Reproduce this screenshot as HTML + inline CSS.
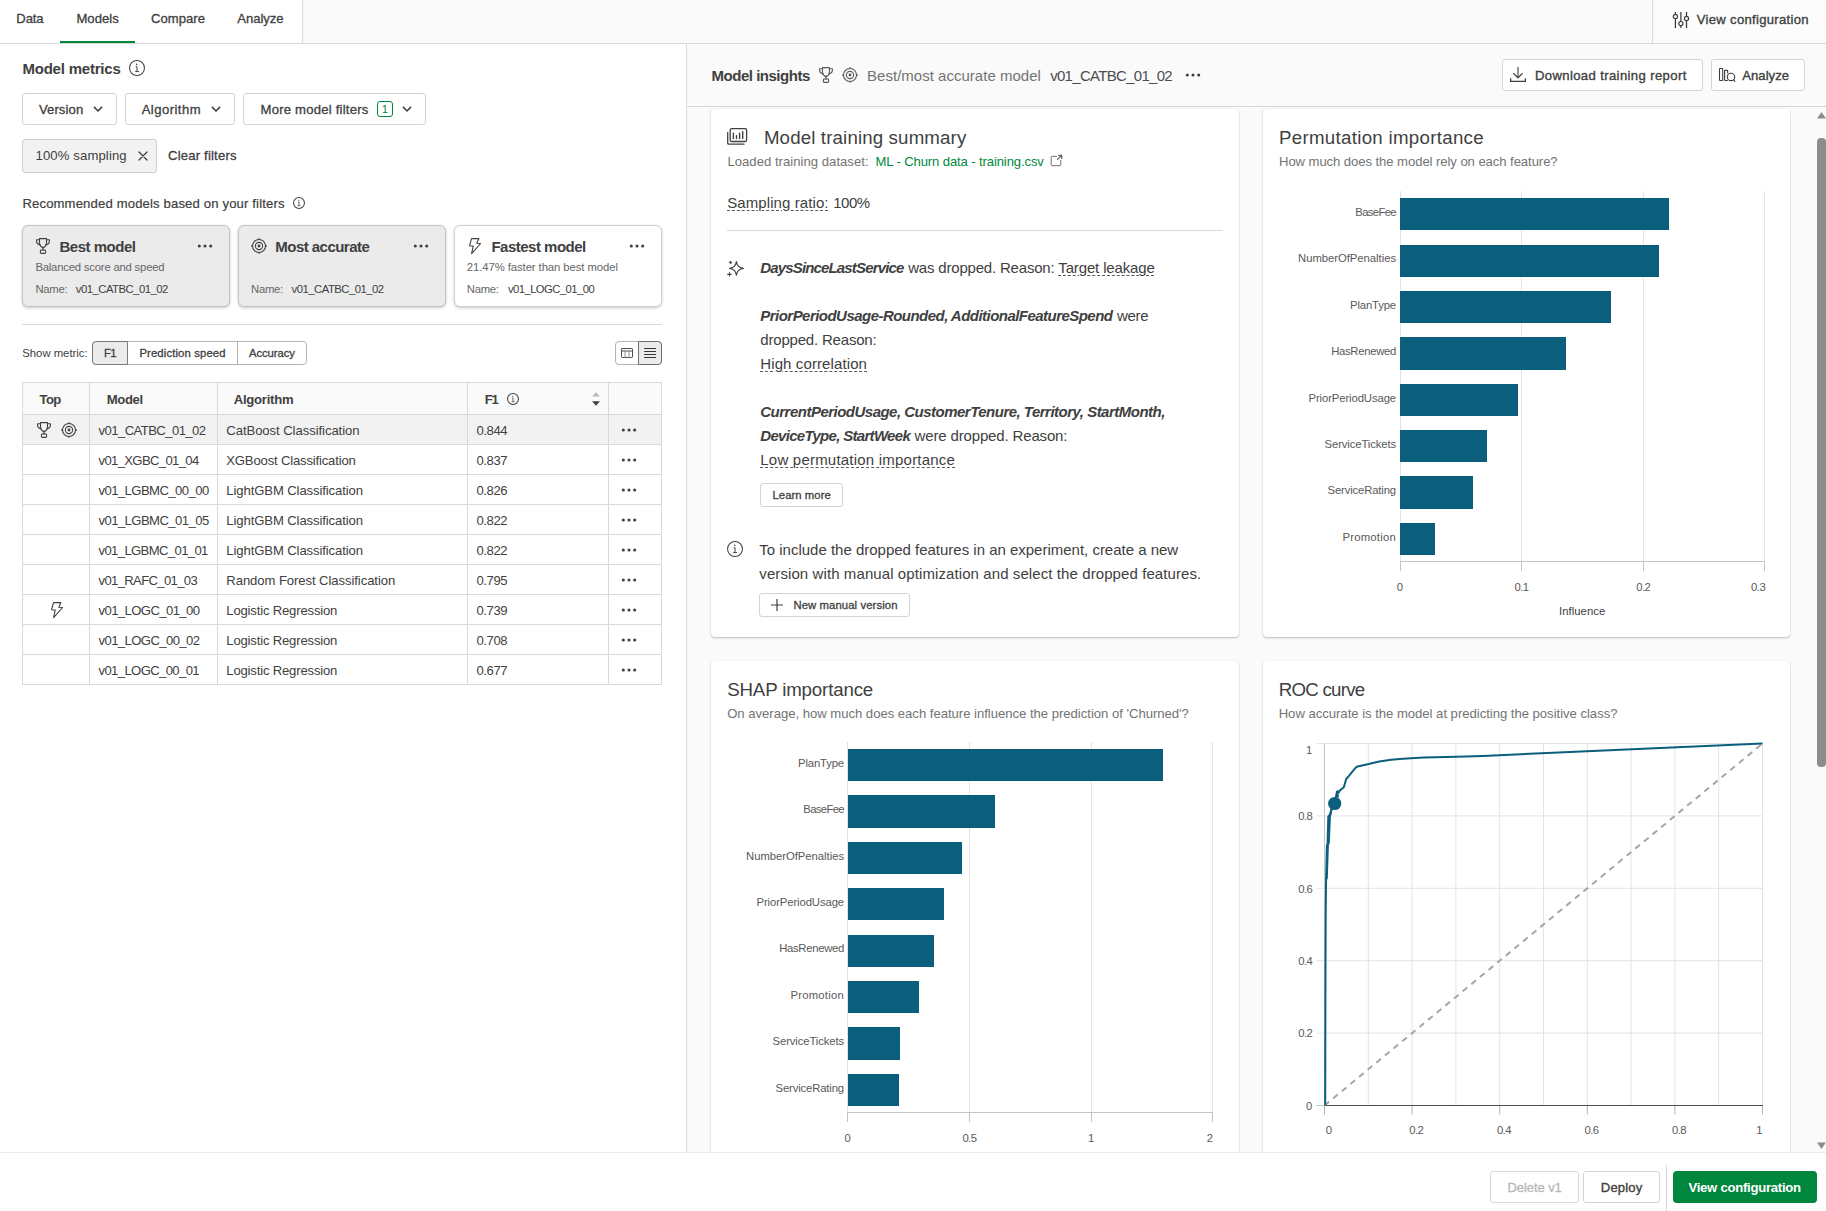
<!DOCTYPE html>
<html lang="en"><head><meta charset="utf-8"><title>Model insights</title>
<style>
html,body{margin:0;padding:0}
body{width:1826px;height:1211px;position:relative;overflow:hidden;background:#fff;font-family:"Liberation Sans", sans-serif;color:#404040;-webkit-font-smoothing:antialiased}
div,span,svg{position:absolute;box-sizing:border-box}
.t{white-space:nowrap;display:block}
.t span{position:static}
svg{overflow:visible}
svg text{font-family:"Liberation Sans", sans-serif}
.btn{background:#fff;border:1px solid #d4d4d4;border-radius:3px}
.card{background:#fff;border-radius:4px;box-shadow:0 1px 2px rgba(0,0,0,.24),0 0 1px rgba(0,0,0,.12)}
</style></head><body>
<div style="left:0;top:0;width:1826px;height:44px;background:#fafafa"></div>
<div style="left:0;top:0;width:302px;height:43px;background:#fff"></div>
<div style="left:302px;top:0;width:1px;height:43px;background:#d9d9d9"></div>
<div style="left:1652px;top:0;width:1px;height:43px;background:#d9d9d9"></div>
<div style="left:1657px;top:0;width:169px;height:39px;background:#fcfcfc;border-radius:0 0 0 4px"></div>
<div style="left:0;top:43px;width:1826px;height:1px;background:#d9d9d9"></div>
<div style="left:60px;top:41px;width:75px;height:2px;background:#00873d"></div>
<div style="left:0;top:44px;width:686px;height:1108px;background:#fff"></div>
<div style="left:686px;top:44px;width:1px;height:1108px;background:#d9d9d9"></div>
<div style="left:687px;top:44px;width:1139px;height:1108px;background:#fafafa"></div>
<span class="t" id="t0" style="top:11.00px;font-size:13.1px;line-height:15px;color:#404040;left:16.30px;-webkit-text-stroke:0.3px #404040;letter-spacing:-0.106px">Data</span>
<span class="t" id="t1" style="top:11.00px;font-size:13.1px;line-height:15px;color:#404040;left:76.40px;-webkit-text-stroke:0.3px #404040;letter-spacing:0.033px">Models</span>
<span class="t" id="t2" style="top:11.00px;font-size:13.1px;line-height:15px;color:#404040;left:151.00px;-webkit-text-stroke:0.3px #404040;letter-spacing:0.022px">Compare</span>
<span class="t" id="t3" style="top:11.00px;font-size:13.1px;line-height:15px;color:#404040;left:237.30px;-webkit-text-stroke:0.3px #404040;letter-spacing:-0.045px">Analyze</span>
<svg style="left:1672px;top:11px" width="18" height="18" viewBox="0 0 18 18" fill="none" stroke="#404040" stroke-width="1.1" stroke-linecap="round" stroke-linejoin="round" ><path d="M3.4 1.1V3.3M3.4 7.7V16.9M8.9 1.1V10.4M8.9 14.8V16.9M14.5 1.1V5.2M14.5 9.6V16.9" stroke-width="1.3" stroke-linecap="butt"/><circle cx="3.4" cy="5.5" r="2.1" stroke-width="1.2"/><circle cx="8.9" cy="12.6" r="2.1" stroke-width="1.2"/><circle cx="14.5" cy="7.4" r="2.1" stroke-width="1.2"/></svg>
<span class="t" id="t4" style="top:12.00px;font-size:13.1px;line-height:15px;color:#404040;left:1696.80px;-webkit-text-stroke:0.35px #404040;letter-spacing:0.293px">View configuration</span>
<span class="t" id="t5" style="top:60.00px;font-size:15px;line-height:17px;color:#404040;left:22.40px;font-weight:700;letter-spacing:-0.206px">Model metrics</span>
<svg style="left:128px;top:59px" width="18" height="18" viewBox="0 0 18 18" fill="none" stroke="#404040" stroke-width="1.1" stroke-linecap="round" stroke-linejoin="round" ><g stroke="#404040"><circle cx="9" cy="9" r="7.45" stroke-width="1.05"/><circle cx="8.70" cy="5.35" r="0.78" fill="#404040" stroke="none"/><path d="M7.65 7.70H9.00V12.50" stroke-width="1.00" stroke-linecap="butt" stroke-linejoin="miter"/><path d="M7.20 12.55H11.00" stroke-width="1.00" stroke-linecap="butt"/></g></svg>
<div class="btn" style="left:22px;top:93px;width:95px;height:32px"></div>
<div class="btn" style="left:125px;top:93px;width:110px;height:32px"></div>
<div class="btn" style="left:243px;top:93px;width:183px;height:32px"></div>
<span class="t" id="t6" style="top:102.00px;font-size:13.1px;line-height:15px;color:#404040;left:38.90px;-webkit-text-stroke:0.3px #404040;letter-spacing:0.110px">Version</span>
<svg style="left:91.9px;top:105.1px" width="12" height="8" viewBox="0 0 12 8" fill="none" stroke="#404040" stroke-width="1.1" stroke-linecap="round" stroke-linejoin="round" ><path d="M2 1.9L6 6L10 1.9" stroke-width="1.55" stroke-linecap="butt" stroke-linejoin="miter"/></svg>
<span class="t" id="t7" style="top:102.00px;font-size:13.1px;line-height:15px;color:#404040;left:141.70px;-webkit-text-stroke:0.3px #404040;letter-spacing:0.446px">Algorithm</span>
<svg style="left:210px;top:105.2px" width="12" height="8" viewBox="0 0 12 8" fill="none" stroke="#404040" stroke-width="1.1" stroke-linecap="round" stroke-linejoin="round" ><path d="M2 1.9L6 6L10 1.9" stroke-width="1.55" stroke-linecap="butt" stroke-linejoin="miter"/></svg>
<span class="t" id="t8" style="top:102.00px;font-size:13.1px;line-height:15px;color:#404040;left:260.50px;-webkit-text-stroke:0.3px #404040;letter-spacing:0.219px">More model filters</span>
<div style="left:377px;top:101px;width:16px;height:16px;border:1px solid #00873d;border-radius:3px;background:#fff"></div>
<div class="t" id="t9" style="top:103.00px;font-size:11.3px;line-height:12px;color:#00873d;left:345.00px;width:80px;text-align:center"><span>1</span></div>
<svg style="left:401px;top:105.2px" width="12" height="8" viewBox="0 0 12 8" fill="none" stroke="#404040" stroke-width="1.1" stroke-linecap="round" stroke-linejoin="round" ><path d="M2 1.9L6 6L10 1.9" stroke-width="1.55" stroke-linecap="butt" stroke-linejoin="miter"/></svg>
<div style="left:22px;top:139px;width:135px;height:34px;background:#f2f2f2;border:1px solid #cfcfcf;border-radius:3px"></div>
<span class="t" id="t10" style="top:148.00px;font-size:13.1px;line-height:15px;color:#404040;left:35.50px;letter-spacing:0.134px">100% sampling</span>
<svg style="left:137.9px;top:150.95px" width="10" height="10" viewBox="0 0 10 10" fill="none" stroke="#404040" stroke-width="1.1" stroke-linecap="round" stroke-linejoin="round" ><path d="M1 1L9 9M9 1L1 9" stroke-width="1.25" stroke-linecap="round"/></svg>
<span class="t" id="t11" style="top:148.00px;font-size:13.1px;line-height:15px;color:#404040;left:168.00px;-webkit-text-stroke:0.3px #404040;letter-spacing:0.190px">Clear filters</span>
<span class="t" id="t12" style="top:196.00px;font-size:13.1px;line-height:15px;color:#404040;left:22.40px;-webkit-text-stroke:0.2px #404040;letter-spacing:0.152px">Recommended models based on your filters</span>
<svg style="left:292px;top:196.4px" width="14" height="14" viewBox="0 0 14 14" fill="none" stroke="#404040" stroke-width="1.1" stroke-linecap="round" stroke-linejoin="round" ><g stroke="#404040"><circle cx="7" cy="7" r="5.45" stroke-width="1.05"/><circle cx="6.78" cy="4.26" r="0.58" fill="#404040" stroke="none"/><path d="M5.99 6.03H7.00V9.62" stroke-width="0.75" stroke-linecap="butt" stroke-linejoin="miter"/><path d="M5.65 9.66H8.50" stroke-width="0.75" stroke-linecap="butt"/></g></svg>
<div style="left:22px;top:225px;width:208px;height:82px;background:#ebebeb;border:1px solid #c4c4c4;border-radius:6px;box-shadow:0 1px 3px rgba(0,0,0,.22)"></div>
<div style="left:238px;top:225px;width:208px;height:82px;background:#ebebeb;border:1px solid #c4c4c4;border-radius:6px;box-shadow:0 1px 3px rgba(0,0,0,.22)"></div>
<div style="left:454px;top:225px;width:208px;height:82px;background:#fff;border:1px solid #d0d0d0;border-radius:6px;box-shadow:0 1px 3px rgba(0,0,0,.22)"></div>
<svg style="left:35.5px;top:238.2px" width="14" height="16" viewBox="0 0 14 16" fill="none" stroke="#404040" stroke-width="1.1" stroke-linecap="round" stroke-linejoin="round" ><g stroke="#404040"><path d="M3.5 .6H10.5V4.5C10.5 7.4 8.6 9.4 7 9.4C5.4 9.4 3.5 7.4 3.5 4.5Z"/><path d="M3.5 1.7H.6V3.4C.6 5 2 6.3 4 6.9"/><path d="M10.5 1.7H13.4V3.4C13.4 5 12 6.3 10 6.9"/><path d="M7 9.4V12" stroke-width="1.3"/><rect x="4.4" y="12" width="5.2" height="3.4" rx=".9"/></g></svg>
<span class="t" id="t13" style="top:238.00px;font-size:15px;line-height:17px;color:#404040;left:59.50px;font-weight:700;letter-spacing:-0.490px">Best model</span>
<svg style="left:196.2px;top:243.3px" width="18" height="6" viewBox="0 0 18 6" fill="none" stroke="#404040" stroke-width="1.1" stroke-linecap="round" stroke-linejoin="round" ><g fill="#404040" stroke="none"><circle cx="3.3" cy="3" r="1.55"/><circle cx="9" cy="3" r="1.55"/><circle cx="14.7" cy="3" r="1.55"/></g></svg>
<span class="t" id="t14" style="top:261.00px;font-size:11.3px;line-height:12px;color:#666;left:35.40px;letter-spacing:-0.199px">Balanced score and speed</span>
<span class="t" id="t15" style="top:283.00px;font-size:11.3px;line-height:12px;color:#666;left:35.40px;letter-spacing:-0.285px">Name:</span>
<span class="t" id="t16" style="top:283.00px;font-size:11.3px;line-height:12px;color:#404040;left:75.80px;letter-spacing:-0.514px">v01_CATBC_01_02</span>
<svg style="left:250.89999999999998px;top:238.2px" width="16" height="16" viewBox="0 0 16 16" fill="none" stroke="#404040" stroke-width="1.1" stroke-linecap="round" stroke-linejoin="round" ><g stroke="#404040"><circle cx="8" cy="8" r="6.5"/><circle cx="8" cy="8" r="3.6"/><circle cx="8" cy="8" r="1.4" fill="#404040" stroke="none"/><path d="M8 .4V1.6M8 14.4V15.6M.4 8H1.6M14.4 8H15.6" stroke-width="1.8" stroke-linecap="butt"/></g></svg>
<span class="t" id="t17" style="top:238.00px;font-size:15px;line-height:17px;color:#404040;left:275.30px;font-weight:700;letter-spacing:-0.534px">Most accurate</span>
<svg style="left:412.2px;top:243.3px" width="18" height="6" viewBox="0 0 18 6" fill="none" stroke="#404040" stroke-width="1.1" stroke-linecap="round" stroke-linejoin="round" ><g fill="#404040" stroke="none"><circle cx="3.3" cy="3" r="1.55"/><circle cx="9" cy="3" r="1.55"/><circle cx="14.7" cy="3" r="1.55"/></g></svg>
<span class="t" id="t18" style="top:283.00px;font-size:11.3px;line-height:12px;color:#666;left:251.10px;letter-spacing:-0.285px">Name:</span>
<span class="t" id="t19" style="top:283.00px;font-size:11.3px;line-height:12px;color:#404040;left:291.60px;letter-spacing:-0.507px">v01_CATBC_01_02</span>
<svg style="left:469px;top:237.7px" width="12" height="16" viewBox="0 0 12 16" fill="none" stroke="#404040" stroke-width="1.1" stroke-linecap="round" stroke-linejoin="round" ><path d="M2.5 .6H9.9L7.8 5.2L11.6 5.5L2.6 15.6L4.2 8.1L.5 7.8Z"/></svg>
<span class="t" id="t20" style="top:238.00px;font-size:15px;line-height:17px;color:#404040;left:491.40px;font-weight:700;letter-spacing:-0.502px">Fastest model</span>
<svg style="left:628.2px;top:243.3px" width="18" height="6" viewBox="0 0 18 6" fill="none" stroke="#404040" stroke-width="1.1" stroke-linecap="round" stroke-linejoin="round" ><g fill="#404040" stroke="none"><circle cx="3.3" cy="3" r="1.55"/><circle cx="9" cy="3" r="1.55"/><circle cx="14.7" cy="3" r="1.55"/></g></svg>
<span class="t" id="t21" style="top:261.00px;font-size:11.3px;line-height:12px;color:#666;left:466.80px;letter-spacing:-0.075px">21.47% faster than best model</span>
<span class="t" id="t22" style="top:283.00px;font-size:11.3px;line-height:12px;color:#666;left:466.80px;letter-spacing:-0.285px">Name:</span>
<span class="t" id="t23" style="top:283.00px;font-size:11.3px;line-height:12px;color:#404040;left:507.90px;letter-spacing:-0.564px">v01_LOGC_01_00</span>
<div style="left:22px;top:324px;width:640px;height:1px;background:#d9d9d9"></div>
<span class="t" id="t24" style="top:347.00px;font-size:11.3px;line-height:12px;color:#404040;left:22.30px">Show metric:</span>
<div style="left:92px;top:341px;width:215px;height:24px;background:#fff;border:1px solid #b3b3b3;border-radius:4px"></div>
<div style="left:92px;top:341px;width:36px;height:24px;background:#ebebeb;border:1px solid #7a7a7a;border-radius:4px 0 0 4px"></div>
<div style="left:237px;top:342px;width:1px;height:22px;background:#b3b3b3"></div>
<span class="t" id="t25" style="top:347.00px;font-size:11.3px;line-height:12px;color:#404040;left:104.10px;-webkit-text-stroke:0.3px #404040;letter-spacing:-0.858px">F1</span>
<span class="t" id="t26" style="top:347.00px;font-size:11.3px;line-height:12px;color:#404040;left:139.40px;-webkit-text-stroke:0.3px #404040;letter-spacing:0.132px">Prediction speed</span>
<span class="t" id="t27" style="top:347.00px;font-size:11.3px;line-height:12px;color:#404040;left:249.00px;-webkit-text-stroke:0.3px #404040;letter-spacing:-0.076px">Accuracy</span>
<div style="left:615px;top:341px;width:47px;height:24px;background:#fff;border:1px solid #b3b3b3;border-radius:4px"></div>
<div style="left:638px;top:341px;width:24px;height:24px;background:#ebebeb;border:1px solid #6e6e6e;border-radius:0 4px 4px 0"></div>
<svg style="left:620px;top:347px" width="14" height="12" viewBox="0 0 14 12" fill="none" stroke="#404040" stroke-width="1.1" stroke-linecap="round" stroke-linejoin="round" ><rect x="1.5" y="1.5" width="11" height="9" rx=".7" stroke="#4d4d4d" stroke-width="1"/><path d="M1.5 4H12.5" stroke="#4d4d4d" stroke-width="1.1"/><path d="M5.1 4V10.5M9 4V10.5" stroke="#8c8c8c" stroke-width="1"/></svg>
<svg style="left:643px;top:347px" width="14" height="12" viewBox="0 0 14 12" fill="none" stroke="#404040" stroke-width="1.1" stroke-linecap="round" stroke-linejoin="round" ><path d="M1.6 1.5H12.5M1.6 4.5H12.5M1.6 7.5H12.5M1.6 10.5H12.5" stroke="#333" stroke-width="1.15" stroke-linecap="round"/></svg>
<div style="left:22px;top:382px;width:640px;height:303px;background:#fff;border:1px solid #d9d9d9"></div>
<div style="left:23px;top:383px;width:638px;height:31px;background:#fafafa"></div>
<div style="left:23px;top:415px;width:638px;height:29px;background:#f2f2f2"></div>
<div style="left:22px;top:414px;width:640px;height:1px;background:#d9d9d9"></div>
<div style="left:22px;top:444px;width:640px;height:1px;background:#d9d9d9"></div>
<div style="left:22px;top:474px;width:640px;height:1px;background:#d9d9d9"></div>
<div style="left:22px;top:504px;width:640px;height:1px;background:#d9d9d9"></div>
<div style="left:22px;top:534px;width:640px;height:1px;background:#d9d9d9"></div>
<div style="left:22px;top:564px;width:640px;height:1px;background:#d9d9d9"></div>
<div style="left:22px;top:594px;width:640px;height:1px;background:#d9d9d9"></div>
<div style="left:22px;top:624px;width:640px;height:1px;background:#d9d9d9"></div>
<div style="left:22px;top:654px;width:640px;height:1px;background:#d9d9d9"></div>
<div style="left:89px;top:382px;width:1px;height:303px;background:#d9d9d9"></div>
<div style="left:217px;top:382px;width:1px;height:303px;background:#d9d9d9"></div>
<div style="left:467px;top:382px;width:1px;height:303px;background:#d9d9d9"></div>
<div style="left:608px;top:382px;width:1px;height:303px;background:#d9d9d9"></div>
<span class="t" id="t28" style="top:392.00px;font-size:13.1px;line-height:15px;color:#404040;left:39.60px;font-weight:700;letter-spacing:-0.653px">Top</span>
<span class="t" id="t29" style="top:392.00px;font-size:13.1px;line-height:15px;color:#404040;left:106.80px;font-weight:700;letter-spacing:-0.362px">Model</span>
<span class="t" id="t30" style="top:392.00px;font-size:13.1px;line-height:15px;color:#404040;left:233.80px;font-weight:700;letter-spacing:-0.262px">Algorithm</span>
<span class="t" id="t31" style="top:392.00px;font-size:13.1px;line-height:15px;color:#404040;left:484.70px;font-weight:700;letter-spacing:-1.254px">F1</span>
<svg style="left:505.79999999999995px;top:392.2px" width="14" height="14" viewBox="0 0 14 14" fill="none" stroke="#404040" stroke-width="1.1" stroke-linecap="round" stroke-linejoin="round" ><g stroke="#404040"><circle cx="7" cy="7" r="5.45" stroke-width="1.05"/><circle cx="6.78" cy="4.26" r="0.58" fill="#404040" stroke="none"/><path d="M5.99 6.03H7.00V9.62" stroke-width="0.75" stroke-linecap="butt" stroke-linejoin="miter"/><path d="M5.65 9.66H8.50" stroke-width="0.75" stroke-linecap="butt"/></g></svg>
<svg style="left:591px;top:391px" width="10" height="16" viewBox="0 0 10 16"><path d="M5 1.2L9 5.6H1Z" fill="#b8b8b8"/><path d="M5 14.8L9 10.2H1Z" fill="#404040"/></svg>
<span class="t" id="t32" style="top:423.00px;font-size:13.1px;line-height:15px;color:#404040;left:98.50px;letter-spacing:-0.566px">v01_CATBC_01_02</span>
<span class="t" id="t33" style="top:423.00px;font-size:13.1px;line-height:15px;color:#404040;left:226.30px;letter-spacing:-0.064px">CatBoost Classification</span>
<span class="t" id="t34" style="top:423.00px;font-size:13.1px;line-height:15px;color:#404040;left:476.50px;letter-spacing:-0.440px">0.844</span>
<svg style="left:620.1px;top:427px" width="18" height="6" viewBox="0 0 18 6" fill="none" stroke="#404040" stroke-width="1.1" stroke-linecap="round" stroke-linejoin="round" ><g fill="#404040" stroke="none"><circle cx="3.3" cy="3" r="1.55"/><circle cx="9" cy="3" r="1.55"/><circle cx="14.7" cy="3" r="1.55"/></g></svg>
<span class="t" id="t35" style="top:453.00px;font-size:13.1px;line-height:15px;color:#404040;left:98.50px;letter-spacing:-0.652px">v01_XGBC_01_04</span>
<span class="t" id="t36" style="top:453.00px;font-size:13.1px;line-height:15px;color:#404040;left:226.30px;letter-spacing:-0.176px">XGBoost Classification</span>
<span class="t" id="t37" style="top:453.00px;font-size:13.1px;line-height:15px;color:#404040;left:476.50px;letter-spacing:-0.440px">0.837</span>
<svg style="left:620.1px;top:457px" width="18" height="6" viewBox="0 0 18 6" fill="none" stroke="#404040" stroke-width="1.1" stroke-linecap="round" stroke-linejoin="round" ><g fill="#404040" stroke="none"><circle cx="3.3" cy="3" r="1.55"/><circle cx="9" cy="3" r="1.55"/><circle cx="14.7" cy="3" r="1.55"/></g></svg>
<span class="t" id="t38" style="top:483.00px;font-size:13.1px;line-height:15px;color:#404040;left:98.50px;letter-spacing:-0.569px">v01_LGBMC_00_00</span>
<span class="t" id="t39" style="top:483.00px;font-size:13.1px;line-height:15px;color:#404040;left:226.30px;letter-spacing:-0.102px">LightGBM Classification</span>
<span class="t" id="t40" style="top:483.00px;font-size:13.1px;line-height:15px;color:#404040;left:476.50px;letter-spacing:-0.440px">0.826</span>
<svg style="left:620.1px;top:487px" width="18" height="6" viewBox="0 0 18 6" fill="none" stroke="#404040" stroke-width="1.1" stroke-linecap="round" stroke-linejoin="round" ><g fill="#404040" stroke="none"><circle cx="3.3" cy="3" r="1.55"/><circle cx="9" cy="3" r="1.55"/><circle cx="14.7" cy="3" r="1.55"/></g></svg>
<span class="t" id="t41" style="top:513.00px;font-size:13.1px;line-height:15px;color:#404040;left:98.50px;letter-spacing:-0.569px">v01_LGBMC_01_05</span>
<span class="t" id="t42" style="top:513.00px;font-size:13.1px;line-height:15px;color:#404040;left:226.30px;letter-spacing:-0.102px">LightGBM Classification</span>
<span class="t" id="t43" style="top:513.00px;font-size:13.1px;line-height:15px;color:#404040;left:476.50px;letter-spacing:-0.440px">0.822</span>
<svg style="left:620.1px;top:517px" width="18" height="6" viewBox="0 0 18 6" fill="none" stroke="#404040" stroke-width="1.1" stroke-linecap="round" stroke-linejoin="round" ><g fill="#404040" stroke="none"><circle cx="3.3" cy="3" r="1.55"/><circle cx="9" cy="3" r="1.55"/><circle cx="14.7" cy="3" r="1.55"/></g></svg>
<span class="t" id="t44" style="top:543.00px;font-size:13.1px;line-height:15px;color:#404040;left:98.50px;letter-spacing:-0.625px">v01_LGBMC_01_01</span>
<span class="t" id="t45" style="top:543.00px;font-size:13.1px;line-height:15px;color:#404040;left:226.30px;letter-spacing:-0.102px">LightGBM Classification</span>
<span class="t" id="t46" style="top:543.00px;font-size:13.1px;line-height:15px;color:#404040;left:476.50px;letter-spacing:-0.440px">0.822</span>
<svg style="left:620.1px;top:547px" width="18" height="6" viewBox="0 0 18 6" fill="none" stroke="#404040" stroke-width="1.1" stroke-linecap="round" stroke-linejoin="round" ><g fill="#404040" stroke="none"><circle cx="3.3" cy="3" r="1.55"/><circle cx="9" cy="3" r="1.55"/><circle cx="14.7" cy="3" r="1.55"/></g></svg>
<span class="t" id="t47" style="top:573.00px;font-size:13.1px;line-height:15px;color:#404040;left:98.50px;letter-spacing:-0.654px">v01_RAFC_01_03</span>
<span class="t" id="t48" style="top:573.00px;font-size:13.1px;line-height:15px;color:#404040;left:226.30px;letter-spacing:-0.077px">Random Forest Classification</span>
<span class="t" id="t49" style="top:573.00px;font-size:13.1px;line-height:15px;color:#404040;left:476.50px;letter-spacing:-0.440px">0.795</span>
<svg style="left:620.1px;top:577px" width="18" height="6" viewBox="0 0 18 6" fill="none" stroke="#404040" stroke-width="1.1" stroke-linecap="round" stroke-linejoin="round" ><g fill="#404040" stroke="none"><circle cx="3.3" cy="3" r="1.55"/><circle cx="9" cy="3" r="1.55"/><circle cx="14.7" cy="3" r="1.55"/></g></svg>
<span class="t" id="t50" style="top:603.00px;font-size:13.1px;line-height:15px;color:#404040;left:98.50px;letter-spacing:-0.593px">v01_LOGC_01_00</span>
<span class="t" id="t51" style="top:603.00px;font-size:13.1px;line-height:15px;color:#404040;left:226.30px;letter-spacing:-0.177px">Logistic Regression</span>
<span class="t" id="t52" style="top:603.00px;font-size:13.1px;line-height:15px;color:#404040;left:476.50px;letter-spacing:-0.440px">0.739</span>
<svg style="left:620.1px;top:607px" width="18" height="6" viewBox="0 0 18 6" fill="none" stroke="#404040" stroke-width="1.1" stroke-linecap="round" stroke-linejoin="round" ><g fill="#404040" stroke="none"><circle cx="3.3" cy="3" r="1.55"/><circle cx="9" cy="3" r="1.55"/><circle cx="14.7" cy="3" r="1.55"/></g></svg>
<span class="t" id="t53" style="top:633.00px;font-size:13.1px;line-height:15px;color:#404040;left:98.50px;letter-spacing:-0.593px">v01_LOGC_00_02</span>
<span class="t" id="t54" style="top:633.00px;font-size:13.1px;line-height:15px;color:#404040;left:226.30px;letter-spacing:-0.177px">Logistic Regression</span>
<span class="t" id="t55" style="top:633.00px;font-size:13.1px;line-height:15px;color:#404040;left:476.50px;letter-spacing:-0.440px">0.708</span>
<svg style="left:620.1px;top:637px" width="18" height="6" viewBox="0 0 18 6" fill="none" stroke="#404040" stroke-width="1.1" stroke-linecap="round" stroke-linejoin="round" ><g fill="#404040" stroke="none"><circle cx="3.3" cy="3" r="1.55"/><circle cx="9" cy="3" r="1.55"/><circle cx="14.7" cy="3" r="1.55"/></g></svg>
<span class="t" id="t56" style="top:663.00px;font-size:13.1px;line-height:15px;color:#404040;left:98.50px;letter-spacing:-0.622px">v01_LOGC_00_01</span>
<span class="t" id="t57" style="top:663.00px;font-size:13.1px;line-height:15px;color:#404040;left:226.30px;letter-spacing:-0.177px">Logistic Regression</span>
<span class="t" id="t58" style="top:663.00px;font-size:13.1px;line-height:15px;color:#404040;left:476.50px;letter-spacing:-0.440px">0.677</span>
<svg style="left:620.1px;top:667px" width="18" height="6" viewBox="0 0 18 6" fill="none" stroke="#404040" stroke-width="1.1" stroke-linecap="round" stroke-linejoin="round" ><g fill="#404040" stroke="none"><circle cx="3.3" cy="3" r="1.55"/><circle cx="9" cy="3" r="1.55"/><circle cx="14.7" cy="3" r="1.55"/></g></svg>
<svg style="left:37px;top:421.8px" width="14" height="16" viewBox="0 0 14 16" fill="none" stroke="#404040" stroke-width="1.1" stroke-linecap="round" stroke-linejoin="round" ><g stroke="#404040"><path d="M3.5 .6H10.5V4.5C10.5 7.4 8.6 9.4 7 9.4C5.4 9.4 3.5 7.4 3.5 4.5Z"/><path d="M3.5 1.7H.6V3.4C.6 5 2 6.3 4 6.9"/><path d="M10.5 1.7H13.4V3.4C13.4 5 12 6.3 10 6.9"/><path d="M7 9.4V12" stroke-width="1.3"/><rect x="4.4" y="12" width="5.2" height="3.4" rx=".9"/></g></svg>
<svg style="left:60.900000000000006px;top:422px" width="16" height="16" viewBox="0 0 16 16" fill="none" stroke="#404040" stroke-width="1.1" stroke-linecap="round" stroke-linejoin="round" ><g stroke="#404040"><circle cx="8" cy="8" r="6.5"/><circle cx="8" cy="8" r="3.6"/><circle cx="8" cy="8" r="1.4" fill="#404040" stroke="none"/><path d="M8 .4V1.6M8 14.4V15.6M.4 8H1.6M14.4 8H15.6" stroke-width="1.8" stroke-linecap="butt"/></g></svg>
<svg style="left:51px;top:602px" width="12" height="16" viewBox="0 0 12 16" fill="none" stroke="#404040" stroke-width="1.1" stroke-linecap="round" stroke-linejoin="round" ><path d="M2.5 .6H9.9L7.8 5.2L11.6 5.5L2.6 15.6L4.2 8.1L.5 7.8Z"/></svg>
<div class="card" style="left:711px;top:109px;width:528px;height:527.7px"></div>
<div class="card" style="left:1263px;top:109px;width:527px;height:527.7px"></div>
<div class="card" style="left:711px;top:661px;width:528px;height:500px"></div>
<div class="card" style="left:1263px;top:661px;width:527px;height:500px"></div>
<div style="left:687px;top:44px;width:1139px;height:62px;background:#fafafa"></div>
<div style="left:687px;top:106px;width:1139px;height:1px;background:#d6d6d6"></div>
<span class="t" id="t59" style="top:67.00px;font-size:15px;line-height:17px;color:#404040;left:711.60px;font-weight:700;letter-spacing:-0.489px">Model insights</span>
<svg style="left:819px;top:66.9px" width="14" height="16" viewBox="0 0 14 16" fill="none" stroke="#404040" stroke-width="1.1" stroke-linecap="round" stroke-linejoin="round" ><g stroke="#595959"><path d="M3.5 .6H10.5V4.5C10.5 7.4 8.6 9.4 7 9.4C5.4 9.4 3.5 7.4 3.5 4.5Z"/><path d="M3.5 1.7H.6V3.4C.6 5 2 6.3 4 6.9"/><path d="M10.5 1.7H13.4V3.4C13.4 5 12 6.3 10 6.9"/><path d="M7 9.4V12" stroke-width="1.3"/><rect x="4.4" y="12" width="5.2" height="3.4" rx=".9"/></g></svg>
<svg style="left:842px;top:67px" width="16" height="16" viewBox="0 0 16 16" fill="none" stroke="#404040" stroke-width="1.1" stroke-linecap="round" stroke-linejoin="round" ><g stroke="#595959"><circle cx="8" cy="8" r="6.5"/><circle cx="8" cy="8" r="3.6"/><circle cx="8" cy="8" r="1.4" fill="#595959" stroke="none"/><path d="M8 .4V1.6M8 14.4V15.6M.4 8H1.6M14.4 8H15.6" stroke-width="1.8" stroke-linecap="butt"/></g></svg>
<span class="t" id="t60" style="top:67.00px;font-size:15px;line-height:17px;color:#737373;left:867.10px;letter-spacing:0.016px">Best/most accurate model</span>
<span class="t" id="t61" style="top:67.00px;font-size:15px;line-height:17px;color:#4d4d4d;left:1050.20px;letter-spacing:-0.704px">v01_CATBC_01_02</span>
<svg style="left:1184.2px;top:72.3px" width="18" height="6" viewBox="0 0 18 6" fill="none" stroke="#404040" stroke-width="1.1" stroke-linecap="round" stroke-linejoin="round" ><g fill="#404040" stroke="none"><circle cx="3.3" cy="3" r="1.55"/><circle cx="9" cy="3" r="1.55"/><circle cx="14.7" cy="3" r="1.55"/></g></svg>
<div class="btn" style="left:1502px;top:59px;width:201px;height:32px"></div>
<svg style="left:1509px;top:66px" width="18" height="17" viewBox="0 0 18 17" fill="none" stroke="#404040" stroke-width="1.1" stroke-linecap="round" stroke-linejoin="round" ><path d="M1.6 12.3V15.3H16.4V12.3" stroke-width="1.3" stroke-linecap="butt" stroke-linejoin="miter"/><path d="M9 1.5V11.4" stroke-width="1.3" stroke="#595959"/><path d="M4.7 7.6L9 11.7L13.3 7.6" stroke-width="1.3"/></svg>
<span class="t" id="t62" style="top:68.00px;font-size:13.1px;line-height:15px;color:#404040;left:1534.90px;-webkit-text-stroke:0.35px #404040;letter-spacing:0.380px">Download training report</span>
<div class="btn" style="left:1711px;top:59px;width:94px;height:32px"></div>
<svg style="left:1718px;top:67px" width="18" height="16" viewBox="0 0 18 16" fill="none" stroke="#404040" stroke-width="1.1" stroke-linecap="round" stroke-linejoin="round" ><rect x="1.5" y="1.5" width="3.2" height="12" rx=".5"/><path d="M9.7 6V3.9Q9.7 3.4 9.2 3.4H7.1Q6.6 3.4 6.6 3.9V13Q6.6 13.5 7.1 13.5H9.4"/><circle cx="13" cy="9.9" r="3.7" fill="#fff"/><path d="M15.6 12.7L16.9 14.3"/></svg>
<span class="t" id="t63" style="top:68.00px;font-size:13.1px;line-height:15px;color:#404040;left:1742.30px;-webkit-text-stroke:0.35px #404040;letter-spacing:0.016px">Analyze</span>
<svg style="left:726px;top:127px" width="22" height="19" viewBox="0 0 22 19" fill="none" stroke="#404040" stroke-width="1.1" stroke-linecap="round" stroke-linejoin="round" ><rect x="4.2" y="1.6" width="16.4" height="12.9" rx="1.6" stroke-width="1.3"/><path d="M1.7 5.6V16Q1.7 17.2 2.9 17.2H18" stroke-width="1.3"/><path d="M7.4 6.3V11.5M10.5 8.6V11.5M13.6 6.3V11.5M16.7 4.7V11.5" stroke-width="1.4"/></svg>
<span class="t" id="t64" style="top:127.00px;font-size:18.7px;line-height:21px;color:#404040;left:763.90px;letter-spacing:0.144px">Model training summary</span>
<span class="t" id="t65" style="top:154.00px;font-size:13.1px;line-height:15px;color:#737373;left:727.40px;letter-spacing:0.029px">Loaded training dataset:</span>
<span class="t" id="t66" style="top:154.00px;font-size:13.1px;line-height:15px;color:#00873d;left:875.50px;letter-spacing:-0.125px">ML - Churn data - training.csv</span>
<svg style="left:1050px;top:154px" width="13" height="13" viewBox="0 0 13 13" fill="none" stroke="#404040" stroke-width="1.1" stroke-linecap="round" stroke-linejoin="round" ><path d="M6.4 2.4H2.3Q1.2 2.4 1.2 3.5V10.5Q1.2 11.6 2.3 11.6H9.6Q10.7 11.6 10.7 10.5V6.3" stroke="#8c8c8c" stroke-width="1.2"/><path d="M7.5 5.3L11.5 1.5M8.4 1.3H11.7V4.6" stroke="#595959" stroke-width="1.1"/></svg>
<span class="t" id="t67" style="top:194.00px;font-size:15px;line-height:17px;color:#404040;left:727.20px;letter-spacing:0.092px;text-decoration:underline dashed;text-decoration-thickness:1px;text-underline-offset:2px;text-decoration-color:#595959">Sampling ratio:</span>
<span class="t" id="t68" style="top:194.00px;font-size:15px;line-height:17px;color:#404040;left:833.30px;letter-spacing:-0.536px">100%</span>
<div style="left:727px;top:229.5px;width:496px;height:1px;background:#d9d9d9"></div>
<svg style="left:726px;top:259px" width="19" height="19" viewBox="0 0 19 19" fill="none" stroke="#404040" stroke-width="1.1" stroke-linecap="round" stroke-linejoin="round" ><path d="M10.4 2.6C11.2 6.6 12.4 8.4 17.4 9.4C12.4 10.4 11.2 12.2 10.4 16.2C9.6 12.2 8.4 10.4 3.7 9.4C8.4 8.4 9.6 6.6 10.4 2.6Z" stroke-width="1.15"/><path d="M4.6 2.1L5.9 3.5L4.6 4.9L3.3 3.5Z" fill="#404040" stroke-width=".5"/><path d="M3.5 13.2V17.6M1.3 15.4H5.7" stroke-width="1.1" stroke-linecap="butt"/></svg>
<span class="t" id="t69" style="top:259.00px;font-size:15px;line-height:17px;color:#404040;left:760.30px;font-weight:700;font-style:italic;letter-spacing:-0.847px">DaysSinceLastService</span>
<span class="t" id="t70" style="top:259.00px;font-size:15px;line-height:17px;color:#404040;left:908.20px;letter-spacing:-0.190px">was dropped. Reason:</span>
<span class="t" id="t71" style="top:259.00px;font-size:15px;line-height:17px;color:#404040;left:1058.30px;letter-spacing:-0.141px;text-decoration:underline dashed;text-decoration-thickness:1px;text-underline-offset:2px;text-decoration-color:#595959">Target leakage</span>
<span class="t" id="t72" style="top:307.00px;font-size:15px;line-height:17px;color:#404040;left:760.30px;font-weight:700;font-style:italic;letter-spacing:-0.535px">PriorPeriodUsage-Rounded, AdditionalFeatureSpend</span>
<span class="t" id="t73" style="top:307.00px;font-size:15px;line-height:17px;color:#404040;left:1116.90px;letter-spacing:-0.262px">were</span>
<span class="t" id="t74" style="top:331.00px;font-size:15px;line-height:17px;color:#404040;left:760.30px;letter-spacing:-0.191px">dropped. Reason:</span>
<span class="t" id="t75" style="top:355.00px;font-size:15px;line-height:17px;color:#404040;left:760.30px;letter-spacing:0.106px;text-decoration:underline dashed;text-decoration-thickness:1px;text-underline-offset:2px;text-decoration-color:#595959">High correlation</span>
<span class="t" id="t76" style="top:403.00px;font-size:15px;line-height:17px;color:#404040;left:760.30px;font-weight:700;font-style:italic;letter-spacing:-0.512px">CurrentPeriodUsage, CustomerTenure, Territory, StartMonth,</span>
<span class="t" id="t77" style="top:427.00px;font-size:15px;line-height:17px;color:#404040;left:760.30px;font-weight:700;font-style:italic;letter-spacing:-0.690px">DeviceType, StartWeek</span>
<span class="t" id="t78" style="top:427.00px;font-size:15px;line-height:17px;color:#404040;left:914.60px;letter-spacing:-0.153px">were dropped. Reason:</span>
<span class="t" id="t79" style="top:451.00px;font-size:15px;line-height:17px;color:#404040;left:760.30px;letter-spacing:0.213px;text-decoration:underline dashed;text-decoration-thickness:1px;text-underline-offset:2px;text-decoration-color:#595959">Low permutation importance</span>
<div class="btn" style="left:760px;top:483px;width:83px;height:24px"></div>
<span class="t" id="t80" style="top:489.00px;font-size:11.3px;line-height:12px;color:#404040;left:772.50px;-webkit-text-stroke:0.3px #404040;letter-spacing:0.055px">Learn more</span>
<svg style="left:726px;top:539.8px" width="18" height="18" viewBox="0 0 18 18" fill="none" stroke="#404040" stroke-width="1.1" stroke-linecap="round" stroke-linejoin="round" ><g stroke="#404040"><circle cx="9" cy="9" r="7.45" stroke-width="1.05"/><circle cx="8.70" cy="5.35" r="0.78" fill="#404040" stroke="none"/><path d="M7.65 7.70H9.00V12.50" stroke-width="1.00" stroke-linecap="butt" stroke-linejoin="miter"/><path d="M7.20 12.55H11.00" stroke-width="1.00" stroke-linecap="butt"/></g></svg>
<span class="t" id="t81" style="top:541.00px;font-size:15px;line-height:17px;color:#404040;left:759.30px;letter-spacing:-0.009px">To include the dropped features in an experiment, create a new</span>
<span class="t" id="t82" style="top:565.00px;font-size:15px;line-height:17px;color:#404040;left:759.30px;letter-spacing:0.092px">version with manual optimization and select the dropped features.</span>
<div class="btn" style="left:759px;top:593px;width:151px;height:24px"></div>
<svg style="left:770px;top:598px" width="14" height="14" viewBox="0 0 14 14" fill="none" stroke="#404040" stroke-width="1.1" stroke-linecap="round" stroke-linejoin="round" ><path d="M7 1V13M1 7H13" stroke-width="1.2" stroke-linecap="butt"/></svg>
<span class="t" id="t83" style="top:599.00px;font-size:11.3px;line-height:12px;color:#404040;left:793.40px;-webkit-text-stroke:0.3px #404040;letter-spacing:0.105px">New manual version</span>
<span class="t" id="t84" style="top:127.00px;font-size:18.7px;line-height:21px;color:#404040;left:1279.00px;letter-spacing:0.298px">Permutation importance</span>
<span class="t" id="t85" style="top:154.00px;font-size:13.1px;line-height:15px;color:#737373;left:1279.00px;letter-spacing:-0.069px">How much does the model rely on each feature?</span>
<div style="left:1399.5px;top:191px;width:1px;height:379px;background:#e3e3e3"></div>
<div style="left:1521.1px;top:191px;width:1px;height:379px;background:#e3e3e3"></div>
<div style="left:1642.8px;top:191px;width:1px;height:379px;background:#e3e3e3"></div>
<div style="left:1764.1px;top:191px;width:1px;height:379px;background:#e3e3e3"></div>
<div style="left:1399.5px;top:561px;width:365.6px;height:1px;background:#c4c4c4"></div>
<div style="left:1399.5px;top:561px;width:1px;height:9.5px;background:#c4c4c4"></div>
<div style="left:1521.1px;top:561px;width:1px;height:9.5px;background:#c4c4c4"></div>
<div style="left:1642.8px;top:561px;width:1px;height:9.5px;background:#c4c4c4"></div>
<div style="left:1764.1px;top:561px;width:1px;height:9.5px;background:#c4c4c4"></div>
<div style="left:1400px;top:198.20px;width:268.90px;height:32.3px;background:#0c5f7c"></div>
<span class="t" id="t86" style="top:206.00px;font-size:11.3px;line-height:12px;color:#595959;right:430.00px;letter-spacing:-0.649px">BaseFee</span>
<div style="left:1400px;top:244.55px;width:258.80px;height:32.3px;background:#0c5f7c"></div>
<span class="t" id="t87" style="top:252.00px;font-size:11.3px;line-height:12px;color:#595959;right:430.00px;letter-spacing:-0.035px">NumberOfPenalties</span>
<div style="left:1400px;top:290.90px;width:211.20px;height:32.3px;background:#0c5f7c"></div>
<span class="t" id="t88" style="top:299.00px;font-size:11.3px;line-height:12px;color:#595959;right:430.00px;letter-spacing:-0.148px">PlanType</span>
<div style="left:1400px;top:337.25px;width:166.10px;height:32.3px;background:#0c5f7c"></div>
<span class="t" id="t89" style="top:345.00px;font-size:11.3px;line-height:12px;color:#595959;right:430.00px;letter-spacing:-0.298px">HasRenewed</span>
<div style="left:1400px;top:383.60px;width:117.50px;height:32.3px;background:#0c5f7c"></div>
<span class="t" id="t90" style="top:392.00px;font-size:11.3px;line-height:12px;color:#595959;right:430.00px;letter-spacing:-0.101px">PriorPeriodUsage</span>
<div style="left:1400px;top:429.95px;width:86.60px;height:32.3px;background:#0c5f7c"></div>
<span class="t" id="t91" style="top:438.00px;font-size:11.3px;line-height:12px;color:#595959;right:430.00px;letter-spacing:-0.113px">ServiceTickets</span>
<div style="left:1400px;top:476.30px;width:73.30px;height:32.3px;background:#0c5f7c"></div>
<span class="t" id="t92" style="top:484.00px;font-size:11.3px;line-height:12px;color:#595959;right:430.00px;letter-spacing:-0.146px">ServiceRating</span>
<div style="left:1400px;top:522.65px;width:35.00px;height:32.3px;background:#0c5f7c"></div>
<span class="t" id="t93" style="top:531.00px;font-size:11.3px;line-height:12px;color:#595959;right:430.00px;letter-spacing:0.235px">Promotion</span>
<div class="t" id="t94" style="top:581.00px;font-size:11.3px;line-height:12px;color:#595959;left:1360.00px;width:80px;text-align:center"><span>0</span></div>
<div class="t" id="t95" style="top:581.00px;font-size:11.3px;line-height:12px;color:#595959;left:1481.60px;width:80px;text-align:center;letter-spacing:-0.567px"><span>0.1</span></div>
<div class="t" id="t96" style="top:581.00px;font-size:11.3px;line-height:12px;color:#595959;left:1603.30px;width:80px;text-align:center;letter-spacing:-0.567px"><span>0.2</span></div>
<span class="t" id="t97" style="top:581.00px;font-size:11.3px;line-height:12px;color:#595959;right:60.90px;letter-spacing:-0.567px">0.3</span>
<span class="t" id="t98" style="top:605.00px;font-size:11.3px;line-height:12px;color:#404040;left:1559.10px;letter-spacing:0.028px">Influence</span>
<span class="t" id="t99" style="top:679.00px;font-size:18.7px;line-height:21px;color:#404040;left:727.20px;letter-spacing:-0.151px">SHAP importance</span>
<span class="t" id="t100" style="top:706.00px;font-size:13.1px;line-height:15px;color:#737373;left:727.20px;letter-spacing:-0.016px">On average, how much does each feature influence the prediction of 'Churned'?</span>
<div style="left:847.2px;top:742px;width:1px;height:379px;background:#e3e3e3"></div>
<div style="left:968.9px;top:742px;width:1px;height:379px;background:#e3e3e3"></div>
<div style="left:1090.6px;top:742px;width:1px;height:379px;background:#e3e3e3"></div>
<div style="left:1212.1px;top:742px;width:1px;height:379px;background:#e3e3e3"></div>
<div style="left:847.2px;top:1112px;width:365.9px;height:1px;background:#c4c4c4"></div>
<div style="left:847.2px;top:1112px;width:1px;height:9.5px;background:#c4c4c4"></div>
<div style="left:968.9px;top:1112px;width:1px;height:9.5px;background:#c4c4c4"></div>
<div style="left:1090.6px;top:1112px;width:1px;height:9.5px;background:#c4c4c4"></div>
<div style="left:1212.1px;top:1112px;width:1px;height:9.5px;background:#c4c4c4"></div>
<div style="left:848px;top:749.00px;width:314.80px;height:32.3px;background:#0c5f7c"></div>
<span class="t" id="t101" style="top:757.00px;font-size:11.3px;line-height:12px;color:#595959;right:982.00px;letter-spacing:-0.148px">PlanType</span>
<div style="left:848px;top:795.40px;width:147.10px;height:32.3px;background:#0c5f7c"></div>
<span class="t" id="t102" style="top:803.00px;font-size:11.3px;line-height:12px;color:#595959;right:982.00px;letter-spacing:-0.649px">BaseFee</span>
<div style="left:848px;top:841.80px;width:113.70px;height:32.3px;background:#0c5f7c"></div>
<span class="t" id="t103" style="top:850.00px;font-size:11.3px;line-height:12px;color:#595959;right:982.00px;letter-spacing:-0.035px">NumberOfPenalties</span>
<div style="left:848px;top:888.20px;width:96.10px;height:32.3px;background:#0c5f7c"></div>
<span class="t" id="t104" style="top:896.00px;font-size:11.3px;line-height:12px;color:#595959;right:982.00px;letter-spacing:-0.101px">PriorPeriodUsage</span>
<div style="left:848px;top:934.60px;width:85.50px;height:32.3px;background:#0c5f7c"></div>
<span class="t" id="t105" style="top:942.00px;font-size:11.3px;line-height:12px;color:#595959;right:982.00px;letter-spacing:-0.298px">HasRenewed</span>
<div style="left:848px;top:981.00px;width:70.60px;height:32.3px;background:#0c5f7c"></div>
<span class="t" id="t106" style="top:989.00px;font-size:11.3px;line-height:12px;color:#595959;right:982.00px;letter-spacing:0.235px">Promotion</span>
<div style="left:848px;top:1027.40px;width:51.80px;height:32.3px;background:#0c5f7c"></div>
<span class="t" id="t107" style="top:1035.00px;font-size:11.3px;line-height:12px;color:#595959;right:982.00px;letter-spacing:-0.113px">ServiceTickets</span>
<div style="left:848px;top:1073.80px;width:51.00px;height:32.3px;background:#0c5f7c"></div>
<span class="t" id="t108" style="top:1082.00px;font-size:11.3px;line-height:12px;color:#595959;right:982.00px;letter-spacing:-0.146px">ServiceRating</span>
<div class="t" id="t109" style="top:1132.00px;font-size:11.3px;line-height:12px;color:#595959;left:807.70px;width:80px;text-align:center"><span>0</span></div>
<div class="t" id="t110" style="top:1132.00px;font-size:11.3px;line-height:12px;color:#595959;left:929.40px;width:80px;text-align:center;letter-spacing:-0.567px"><span>0.5</span></div>
<div class="t" id="t111" style="top:1132.00px;font-size:11.3px;line-height:12px;color:#595959;left:1051.10px;width:80px;text-align:center"><span>1</span></div>
<span class="t" id="t112" style="top:1132.00px;font-size:11.3px;line-height:12px;color:#595959;right:612.90px">2</span>
<span class="t" id="t113" style="top:679.00px;font-size:18.7px;line-height:21px;color:#404040;left:1278.70px;letter-spacing:-0.732px">ROC curve</span>
<span class="t" id="t114" style="top:706.00px;font-size:13.1px;line-height:15px;color:#737373;left:1278.70px;letter-spacing:-0.019px">How accurate is the model at predicting the positive class?</span>
<svg style="left:0;top:0" width="1826" height="1211" viewBox="0 0 1826 1211" fill="none" stroke-width="1"><path d="M1368.3 743.5V1105.5" stroke="#e3e3e3"/><path d="M1412.1 743.5V1105.5" stroke="#e3e3e3"/><path d="M1455.9 743.5V1105.5" stroke="#e3e3e3"/><path d="M1499.7 743.5V1105.5" stroke="#e3e3e3"/><path d="M1543.5 743.5V1105.5" stroke="#e3e3e3"/><path d="M1587.3 743.5V1105.5" stroke="#e3e3e3"/><path d="M1631.1 743.5V1105.5" stroke="#e3e3e3"/><path d="M1674.9 743.5V1105.5" stroke="#e3e3e3"/><path d="M1718.7 743.5V1105.5" stroke="#e3e3e3"/><path d="M1762.5 743.5V1105.5" stroke="#e3e3e3"/><path d="M1316.5 1105.5H1324.5" stroke="#c4c4c4"/><path d="M1316.5 1033.1H1762.5" stroke="#e3e3e3"/><path d="M1316.5 960.7H1762.5" stroke="#e3e3e3"/><path d="M1316.5 888.3H1762.5" stroke="#e3e3e3"/><path d="M1316.5 815.9H1762.5" stroke="#e3e3e3"/><path d="M1316.5 743.5H1762.5" stroke="#e3e3e3"/><path d="M1324.5 743.5V1105.5" stroke="#c4c4c4"/><path d="M1324.5 1105.5V1114.5" stroke="#b3b3b3"/><path d="M1412.1 1105.5V1114.5" stroke="#b3b3b3"/><path d="M1499.7 1105.5V1114.5" stroke="#b3b3b3"/><path d="M1587.3 1105.5V1114.5" stroke="#b3b3b3"/><path d="M1674.9 1105.5V1114.5" stroke="#b3b3b3"/><path d="M1762.5 1105.5V1114.5" stroke="#b3b3b3"/><path d="M1324.5 1105.5H1763.0" stroke="#4d4d4d"/><path d="M1324.5 1105.5L1762.5 743.5" stroke="#a6a6a6" stroke-width="2" stroke-dasharray="6 5.2"/><path d="M1325.2 1105.5L1325.4 1000L1325.7 910L1326.1 878.6L1326.9 845.5L1327.6 843.5L1328.3 816.5L1329.4 815.4L1330.4 813.2L1332.4 805.8L1334.9 803.6L1336.8 792.4L1337.9 791.2L1338.9 792.4L1339.8 790.6L1342 788.7L1343.8 787.2L1346.2 779L1348.7 776.1L1352.4 771.6L1355.4 767.9L1357.6 766.4L1368.8 763.9L1379.2 761.5L1391.1 759.7L1402.9 758.7L1423.8 757.6L1456.4 756.8L1483.2 756L1530 753.8L1762.5 743.6" stroke="#0c5f7c" stroke-width="2" stroke-linejoin="round"/><path d="M1326.3 879L1326.9 878.4L1328 845L1328.9 843L1330 817L1331.2 811L1333 806M1336.4 797L1337.2 791.3L1338.2 797.5" stroke="#0c5f7c" stroke-width="1.8" stroke-linejoin="round"/><circle cx="1334.7" cy="803.5" r="6.6" fill="#0c5f7c" stroke="none"/></svg>
<span class="t" id="t115" style="top:1100.00px;font-size:11.3px;line-height:12px;color:#595959;right:513.70px">0</span>
<span class="t" id="t116" style="top:1124.00px;font-size:11.3px;line-height:12px;color:#595959;left:1325.80px">0</span>
<span class="t" id="t117" style="top:1027.00px;font-size:11.3px;line-height:12px;color:#595959;right:513.70px;letter-spacing:-0.567px">0.2</span>
<div class="t" id="t118" style="top:1124.00px;font-size:11.3px;line-height:12px;color:#595959;left:1376.30px;width:80px;text-align:center;letter-spacing:-0.567px"><span>0.2</span></div>
<span class="t" id="t119" style="top:955.00px;font-size:11.3px;line-height:12px;color:#595959;right:513.70px;letter-spacing:-0.567px">0.4</span>
<div class="t" id="t120" style="top:1124.00px;font-size:11.3px;line-height:12px;color:#595959;left:1463.90px;width:80px;text-align:center;letter-spacing:-0.567px"><span>0.4</span></div>
<span class="t" id="t121" style="top:883.00px;font-size:11.3px;line-height:12px;color:#595959;right:513.70px;letter-spacing:-0.567px">0.6</span>
<div class="t" id="t122" style="top:1124.00px;font-size:11.3px;line-height:12px;color:#595959;left:1551.50px;width:80px;text-align:center;letter-spacing:-0.567px"><span>0.6</span></div>
<span class="t" id="t123" style="top:810.00px;font-size:11.3px;line-height:12px;color:#595959;right:513.70px;letter-spacing:-0.567px">0.8</span>
<div class="t" id="t124" style="top:1124.00px;font-size:11.3px;line-height:12px;color:#595959;left:1639.10px;width:80px;text-align:center;letter-spacing:-0.567px"><span>0.8</span></div>
<span class="t" id="t125" style="top:744.00px;font-size:11.3px;line-height:12px;color:#595959;right:513.70px">1</span>
<span class="t" id="t126" style="top:1124.00px;font-size:11.3px;line-height:12px;color:#595959;right:63.40px">1</span>
<div style="left:1817px;top:138px;width:9px;height:629px;background:#8c8c8c;border-radius:4px"></div>
<svg style="left:1817px;top:111px" width="9" height="9" viewBox="0 0 9 9"><path d="M4.5 1L9 7.6H0Z" fill="#8c8c8c"/></svg>
<svg style="left:1817px;top:1141px" width="9" height="9" viewBox="0 0 9 9"><path d="M4.5 8L9 1.4H0Z" fill="#8c8c8c"/></svg>
<div style="left:0;top:1152px;width:1826px;height:59px;background:#fff;border-top:1px solid #ececec"></div>
<div class="btn" style="left:1490px;top:1171px;width:89px;height:32px;border-color:#d9d9d9"></div>
<span class="t" id="t127" style="top:1180.00px;font-size:13.1px;line-height:15px;color:#b8b8b8;left:1507.50px;-webkit-text-stroke:0.3px #b8b8b8;letter-spacing:-0.121px">Delete v1</span>
<div class="btn" style="left:1583px;top:1171px;width:77px;height:32px"></div>
<span class="t" id="t128" style="top:1180.00px;font-size:13.1px;line-height:15px;color:#404040;left:1600.80px;-webkit-text-stroke:0.35px #404040;letter-spacing:0.152px">Deploy</span>
<div style="left:1666px;top:1165px;width:1px;height:46px;background:#d9d9d9"></div>
<div style="left:1673px;top:1171px;width:144px;height:32px;background:#00873d;border-radius:4px"></div>
<span class="t" id="t129" style="top:1180.00px;font-size:13.1px;line-height:15px;color:#fff;left:1688.40px;font-weight:700;letter-spacing:-0.245px">View configuration</span>
</body></html>
